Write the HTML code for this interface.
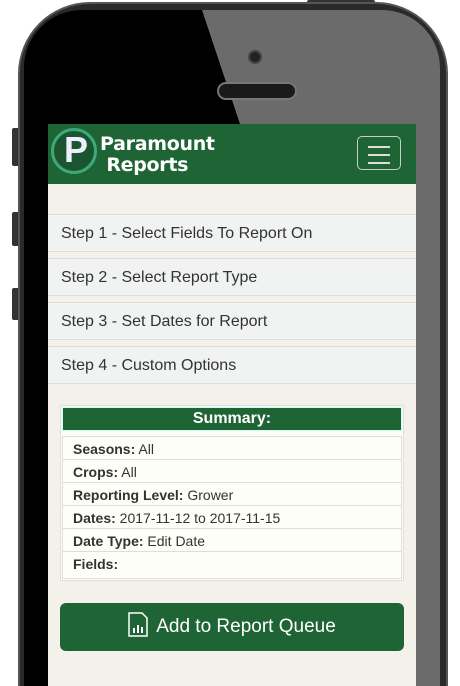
<!DOCTYPE html>
<html style="width:460px;height:686px;overflow:hidden"><head><meta charset="utf-8"><style>
*{box-sizing:border-box;margin:0;padding:0}
body{width:460px;height:686px;overflow:hidden;background:#fff;position:relative;font-family:"Liberation Sans",sans-serif}
.btn{position:absolute;background:#333;border-radius:2px}
.phone{position:absolute;left:18px;top:2px;width:430px;height:684px;border-radius:72px 72px 0 0;background:#2a2a2c;border:2px solid #555;border-bottom:none}
.inner{position:absolute;left:24px;top:10px;width:416px;height:676px;border-radius:58px 58px 0 0;background:#000;overflow:hidden}
.glare{position:absolute;left:0;top:0;width:416px;height:676px;background:#6b6b6b;clip-path:polygon(178px 0,416px 0,416px 676px,388px 676px,388px 114px,216px 114px)}
.cam{position:absolute;left:224px;top:40px;width:14px;height:14px;border-radius:50%;background:#222;border:2px solid #444}
.spk{position:absolute;left:193px;top:72px;width:80px;height:18px;border-radius:9px;background:#1a1a1a;border:2px solid #777}
.screen{position:absolute;left:48px;top:124px;width:368px;height:562px;background:#f3f1ea;overflow:hidden}
.hdr{height:60px;background:#1e6434;position:relative}
.logo{position:absolute;left:3px;top:4px;width:46px;height:46px;border-radius:50%;background:#1a5530;border:3px solid #3fa878}
.logo:after{content:"P";position:absolute;left:10px;top:-2px;color:#eef;font:bold 36px "Liberation Sans",sans-serif}
.brand{position:absolute;left:52px;top:10px;color:#fff;font:bold 19px/21px "DejaVu Sans",sans-serif;letter-spacing:-.3px}
.tog{position:absolute;left:309px;top:12px;width:44px;height:34px;border:1px solid #ccc;border-radius:5px}
.tog i{display:block;width:22px;height:2px;background:#ddd;margin:0 auto;margin-top:6px}
.tog i:first-child{margin-top:9px}
.step{position:absolute;left:0;width:368px;height:38px;background:#f1f2f2;border-top:1px solid #ddd;border-bottom:1px solid #ddd;font-size:16px;color:#333;padding:10px 13px}
.sum{position:absolute;left:12px;top:281px;width:344px;border:1px solid #ddd;background:#fdfdf8;padding:1px}
.sh{height:24px;background:#1e6434;border:1px solid #cfe;color:#fff;font-weight:bold;font-size:16px;text-align:center;line-height:22px;margin-bottom:6px}
.row{height:24px;border:1px solid #ddd;font-size:14px;color:#333;padding:4px 10px;margin-top:-1px;background:#fefef8}
.add{position:absolute;left:12px;top:479px;width:344px;height:48px;background:#1e6434;border-radius:6px;color:#fff;font-size:19px;text-align:center;line-height:48px}
</style></head><body>
<div class="btn" style="left:307px;top:0;width:68px;height:4px"></div>
<div class="btn" style="left:12px;top:128px;width:8px;height:38px"></div>
<div class="btn" style="left:12px;top:212px;width:8px;height:34px"></div>
<div class="btn" style="left:12px;top:288px;width:8px;height:32px"></div>
<div class="phone"></div>
<div class="inner"><div class="glare"></div><div class="cam"></div><div class="spk"></div></div>
<div class="screen">
 <div class="hdr"><div class="logo"></div><div class="brand">Paramount<br>&nbsp;Reports</div><div class="tog"><i></i><i></i><i></i></div></div>
 <div class="step" style="top:90px">Step 1 - Select Fields To Report On</div>
 <div class="step" style="top:134px">Step 2 - Select Report Type</div>
 <div class="step" style="top:178px">Step 3 - Set Dates for Report</div>
 <div class="step" style="top:222px">Step 4 - Custom Options</div>
 <div class="sum"><div class="sh">Summary:</div>
  <div class="row"><b>Seasons:</b> All</div>
  <div class="row"><b>Crops:</b> All</div>
  <div class="row"><b>Reporting Level:</b> Grower</div>
  <div class="row"><b>Dates:</b> 2017-11-12 to 2017-11-15</div>
  <div class="row"><b>Date Type:</b> Edit Date</div>
  <div class="row" style="height:28px"><b>Fields:</b></div>
 </div>
 <div class="add"><svg width="20" height="25" viewBox="0 0 20 25" style="vertical-align:-5px;margin-right:8px"><path d="M1 1h13l5 5v18H1z" fill="none" stroke="#fff" stroke-width="1.5"/><rect x="5" y="16" width="2" height="5" fill="#fff"/><rect x="9" y="13" width="2" height="8" fill="#fff"/><rect x="13" y="15" width="2" height="6" fill="#fff"/></svg>Add to Report Queue</div>
</div>
</body></html>
